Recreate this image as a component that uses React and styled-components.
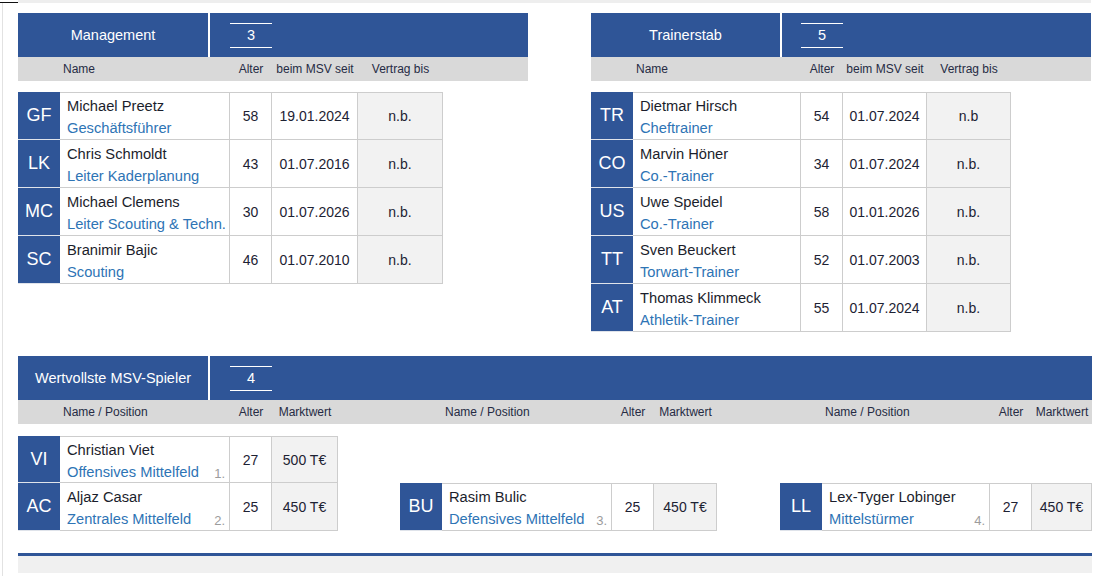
import React from "react";
import styled, { createGlobalStyle } from "styled-components";

const BLUE = "#2f5597";
const LINE = "#cdcdcd";

const Global = createGlobalStyle`
  html, body { margin: 0; padding: 0; background: #fff; }
  body { font-family: "Liberation Sans", Arial, sans-serif; color: #1d2233; }
  * { box-sizing: border-box; }
`;

const TopBar = styled.div`
  display: flex;
  height: 3px;
`;
const Corner = styled.div`
  width: 18px;
  border-bottom: 1px solid #111;
`;
const Strip = styled.div`
  flex: 1;
  margin-right: 12px;
  background: #eeeeee;
`;

const Page = styled.div`
  margin-left: 2px;
  border-left: 1px solid #e2e2e2;
  padding-left: 15px;
  min-height: 573px;
  display: flex;
  flex-direction: column;
`;

const TopSection = styled.div`
  display: flex;
  align-items: flex-start;
  gap: 63px;
  padding-top: 10px;
`;

const Panel = styled.section`
  width: ${(p) => p.$w}px;
  display: flex;
  flex-direction: column;
`;

const Header = styled.div`
  height: 44px;
  background: ${BLUE};
  display: flex;
  align-items: center;
  color: #fff;
  font-size: 14.5px;
`;
const Title = styled.div`
  width: ${(p) => p.$w}px;
  height: 100%;
  display: flex;
  align-items: center;
  justify-content: center;
  border-right: 2px solid #fff;
  white-space: nowrap;
`;
const Count = styled.div`
  margin-left: ${(p) => p.$ml}px;
  width: 42px;
  height: 25px;
  border-top: 1px solid #fff;
  border-bottom: 1px solid #fff;
  display: flex;
  align-items: center;
  justify-content: center;
`;

const SubHeader = styled.div`
  height: 24px;
  background: #d9d9d9;
  display: grid;
  grid-template-columns: ${(p) => p.$cols};
  align-items: center;
  font-size: 12px;
  color: #262b44;
`;
const Label = styled.div`
  text-align: ${(p) => (p.$left ? "left" : "center")};
  padding-left: ${(p) => (p.$left ? "3px" : "0")};
  white-space: nowrap;
`;

const Table = styled.div`
  margin-top: ${(p) => p.$mt}px;
  width: max-content;
  display: flex;
  flex-direction: column;
`;

const Row = styled.div`
  display: grid;
  grid-template-columns: ${(p) => p.$cols};
  grid-template-rows: minmax(0, 1fr);
  height: ${(p) => p.$h || 48}px;
`;

const Badge = styled.div`
  background: ${BLUE};
  color: #fff;
  font-size: 18px;
  display: flex;
  align-items: center;
  justify-content: center;
  border-bottom: 1px solid #dfe3ea;
`;

const Cell = styled.div`
  min-height: 0;
  border-right: 1px solid ${LINE};
  border-bottom: 1px solid ${LINE};
  border-top: ${(p) => (p.$first ? `1px solid ${LINE}` : "none")};
  background: ${(p) => (p.$shade ? "#f2f2f2" : "#fff")};
  font-size: 14px;
  color: #1d2233;
`;

const NameCell = styled(Cell)`
  padding: ${(p) => (p.$first ? 2 : 3)}px 4px 0 7px;
  display: flex;
  flex-direction: column;
  white-space: nowrap;
  overflow: hidden;
  font-size: 14.7px;
`;
const PersonName = styled.div`
  line-height: 22px;
  color: #1b1e2c;
`;
const RoleLine = styled.div`
  display: flex;
  justify-content: space-between;
  align-items: flex-end;
  line-height: 22px;
`;
const Role = styled.span`
  color: #2e74b5;
`;
const Rank = styled.span`
  color: #9c9c9c;
  font-size: 13px;
  line-height: 18px;
`;

const ValueCell = styled(Cell)`
  display: flex;
  align-items: center;
  justify-content: center;
`;

const PlayersSection = styled(Panel)`
  margin-top: 24px;
`;

const PlayerSub = styled.div`
  height: 24px;
  background: #d9d9d9;
  display: grid;
  grid-template-columns: 382px 380px 1fr;
`;
const PlayerGroups = styled.div`
  display: grid;
  grid-template-columns: 382px 380px 1fr;
  margin-top: 12px;
`;
const Group = styled.div`
  display: flex;
  flex-direction: column;
  justify-content: flex-end;
`;

const Footer = styled.div`
  margin-top: 22px;
  border-top: 3px solid ${BLUE};
  background: #f0f0f0;
  flex: 1;
  min-height: 20px;
`;

const mgmt = [
  ["GF", "Michael Preetz", "Geschäftsführer", "58", "19.01.2024", "n.b."],
  ["LK", "Chris Schmoldt", "Leiter Kaderplanung", "43", "01.07.2016", "n.b."],
  ["MC", "Michael Clemens", "Leiter Scouting & Techn.", "30", "01.07.2026", "n.b."],
  ["SC", "Branimir Bajic", "Scouting", "46", "01.07.2010", "n.b."],
];
const trainer = [
  ["TR", "Dietmar Hirsch", "Cheftrainer", "54", "01.07.2024", "n.b"],
  ["CO", "Marvin Höner", "Co.-Trainer", "34", "01.07.2024", "n.b."],
  ["US", "Uwe Speidel", "Co.-Trainer", "58", "01.01.2026", "n.b."],
  ["TT", "Sven Beuckert", "Torwart-Trainer", "52", "01.07.2003", "n.b."],
  ["AT", "Thomas Klimmeck", "Athletik-Trainer", "55", "01.07.2024", "n.b."],
];

const groups = [
  {
    cols: "42px 170px 42px 66px",
    rows: [
      ["VI", "Christian Viet", "Offensives Mittelfeld", "1.", "27", "500 T€", 47],
      ["AC", "Aljaz Casar", "Zentrales Mittelfeld", "2.", "25", "450 T€", 48],
    ],
  },
  {
    cols: "42px 170px 42px 63px",
    rows: [["BU", "Rasim Bulic", "Defensives Mittelfeld", "3.", "25", "450 T€", 48]],
  },
  {
    cols: "42px 168px 42px 60px",
    rows: [["LL", "Lex-Tyger Lobinger", "Mittelstürmer", "4.", "27", "450 T€", 48]],
  },
];

function StaffPanel({ width, titleW, countMl, title, count, cols, rows }) {
  return (
    <Panel $w={width}>
      <Header>
        <Title $w={titleW}>{title}</Title>
        <Count $ml={countMl}>{count}</Count>
      </Header>
      <SubHeader $cols={`${cols} 1fr`}>
        <div />
        <Label $left>Name</Label>
        <Label>Alter</Label>
        <Label>beim MSV seit</Label>
        <Label>Vertrag bis</Label>
      </SubHeader>
      <Table $mt={11}>
        {rows.map((r, i) => (
          <Row key={r[0]} $cols={cols}>
            <Badge>{r[0]}</Badge>
            <NameCell $first={i === 0}>
              <PersonName>{r[1]}</PersonName>
              <RoleLine>
                <Role>{r[2]}</Role>
              </RoleLine>
            </NameCell>
            <ValueCell $first={i === 0}>{r[3]}</ValueCell>
            <ValueCell $first={i === 0}>{r[4]}</ValueCell>
            <ValueCell $first={i === 0} $shade>{r[5]}</ValueCell>
          </Row>
        ))}
      </Table>
    </Panel>
  );
}

export default function App() {
  return (
    <>
      <Global />
      <TopBar>
        <Corner />
        <Strip />
      </TopBar>
      <Page>
        <TopSection>
          <StaffPanel
            width={510}
            titleW={192}
            countMl={20}
            title="Management"
            count="3"
            cols="42px 170px 42px 86px 85px"
            rows={mgmt}
          />
          <StaffPanel
            width={500}
            titleW={191}
            countMl={19}
            title="Trainerstab"
            count="5"
            cols="42px 168px 42px 84px 84px"
            rows={trainer}
          />
        </TopSection>

        <PlayersSection $w={1074}>
          <Header>
            <Title $w={192}>Wertvollste MSV-Spieler</Title>
            <Count $ml={20}>4</Count>
          </Header>
          <PlayerSub>
            {groups.map((g, gi) => (
              <SubHeader key={gi} $cols={g.cols}>
                <div />
                <Label $left>Name / Position</Label>
                <Label>Alter</Label>
                <Label>Marktwert</Label>
              </SubHeader>
            ))}
          </PlayerSub>
          <PlayerGroups>
            {groups.map((g, gi) => (
              <Group key={gi}>
                <Table $mt={0}>
                  {g.rows.map((r, i) => (
                    <Row key={r[0]} $cols={g.cols} $h={r[6]}>
                      <Badge>{r[0]}</Badge>
                      <NameCell $first={i === 0}>
                        <PersonName>{r[1]}</PersonName>
                        <RoleLine>
                          <Role>{r[2]}</Role>
                          <Rank>{r[3]}</Rank>
                        </RoleLine>
                      </NameCell>
                      <ValueCell $first={i === 0}>{r[4]}</ValueCell>
                      <ValueCell $first={i === 0} $shade>{r[5]}</ValueCell>
                    </Row>
                  ))}
                </Table>
              </Group>
            ))}
          </PlayerGroups>
          <Footer />
        </PlayersSection>
      </Page>
    </>
  );
}
